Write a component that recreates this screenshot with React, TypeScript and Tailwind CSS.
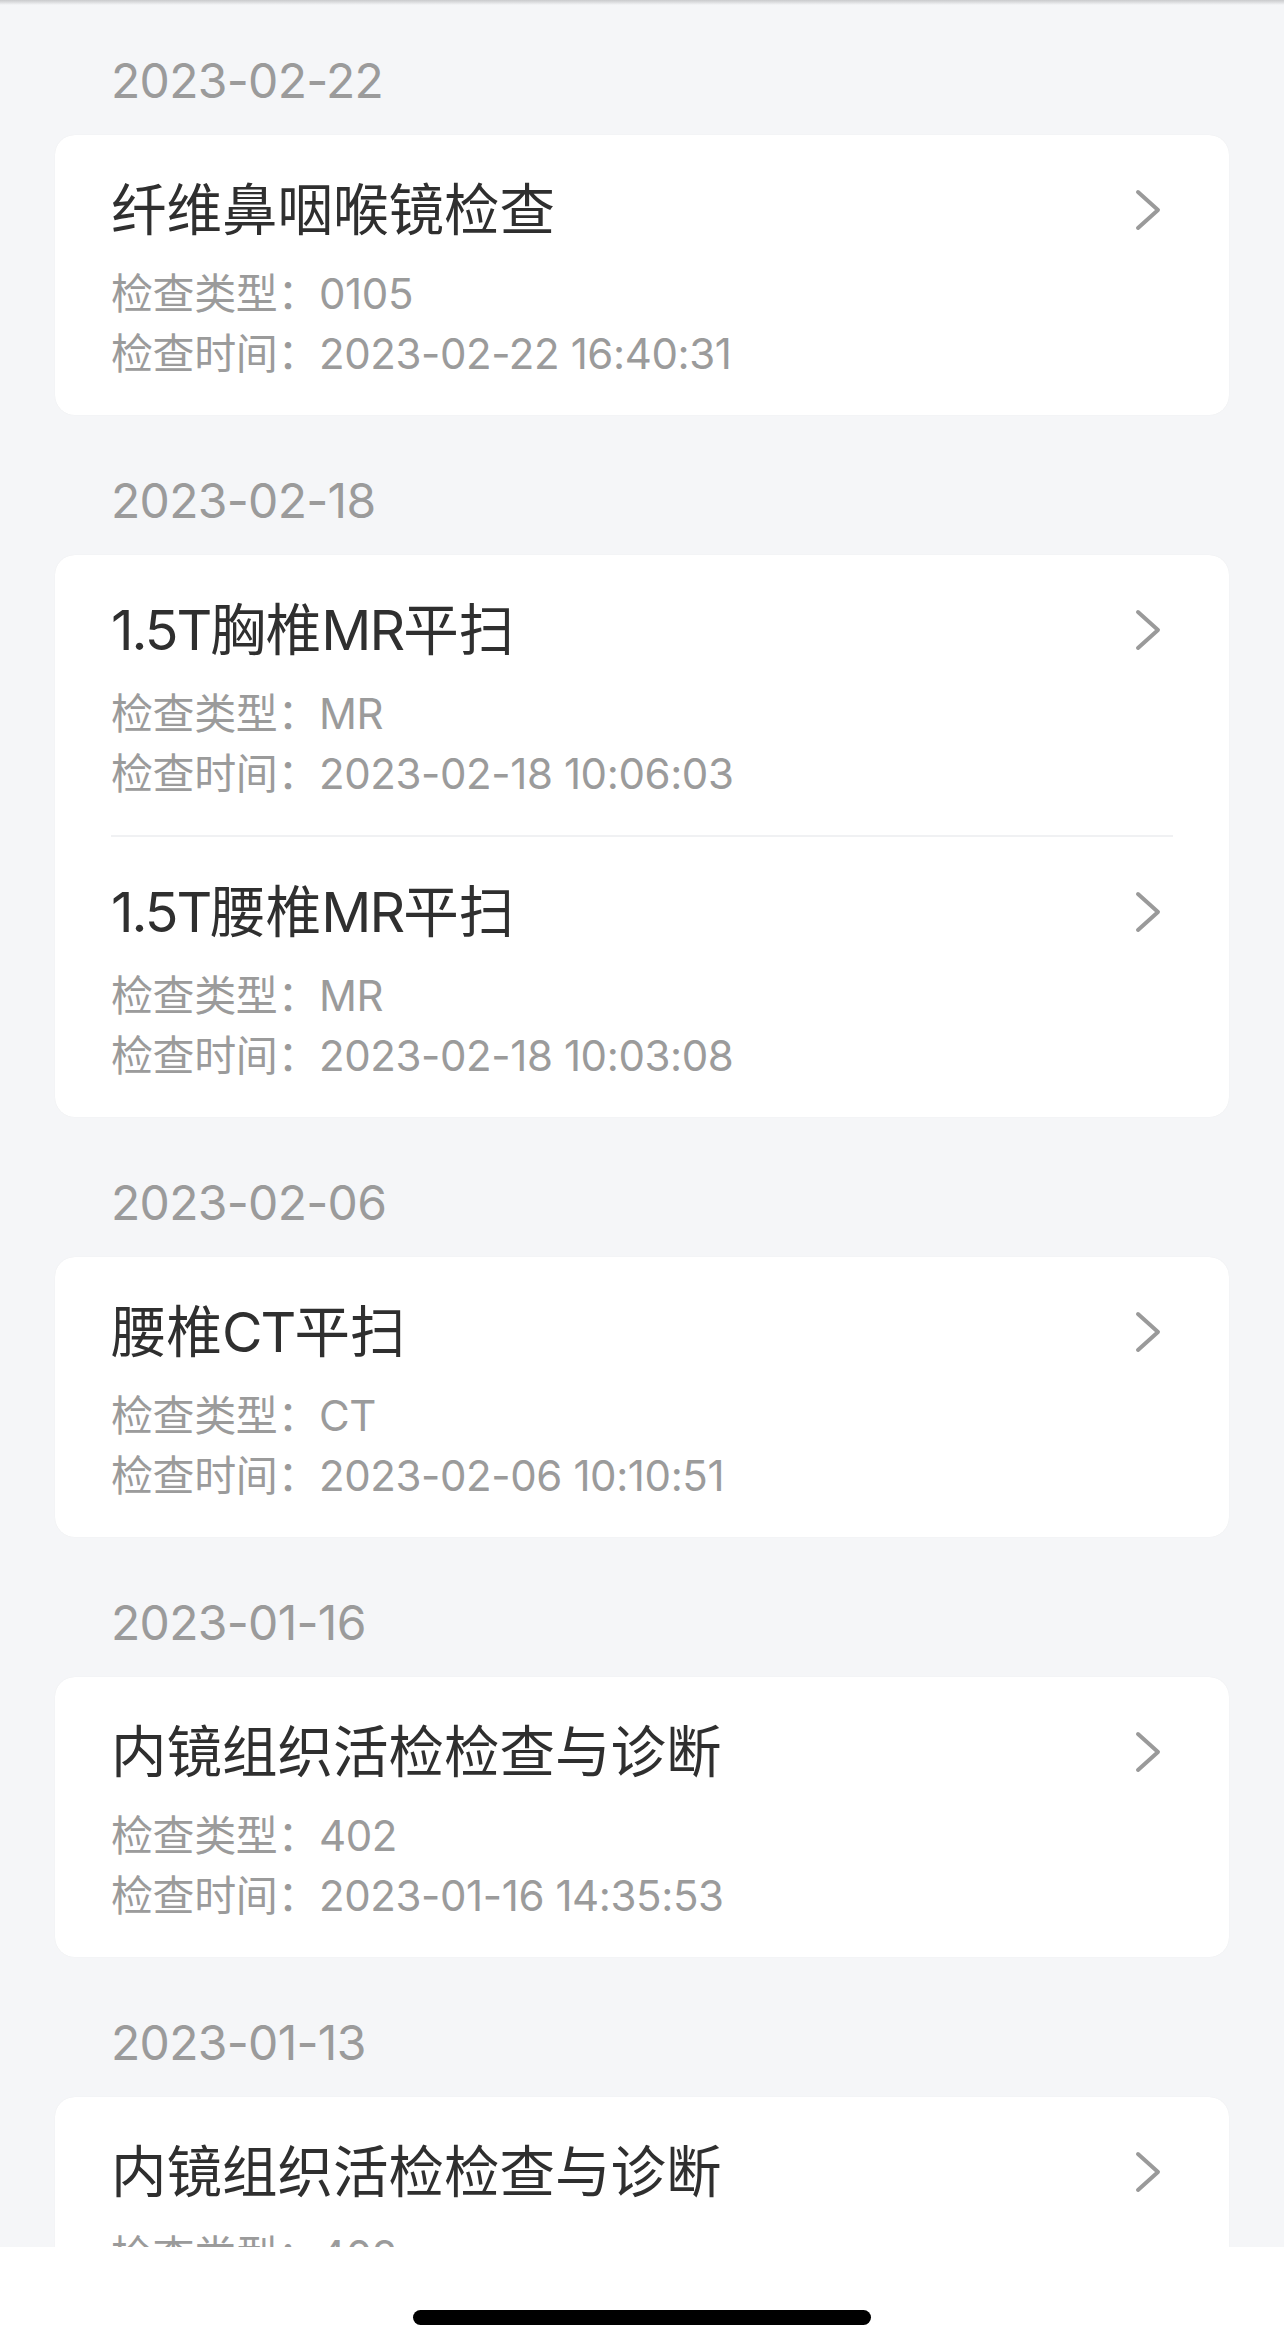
import React from "react";

interface Exam {
  name: string;
  type: string;
  time: string;
}

interface Group {
  date: string;
  exams: Exam[];
}

const groups: Group[] = [
  {
    date: "2023-02-22",
    exams: [{ name: "纤维鼻咽喉镜检查", type: "0105", time: "2023-02-22 16:40:31" }],
  },
  {
    date: "2023-02-18",
    exams: [
      { name: "1.5T胸椎MR平扫", type: "MR", time: "2023-02-18 10:06:03" },
      { name: "1.5T腰椎MR平扫", type: "MR", time: "2023-02-18 10:03:08" },
    ],
  },
  {
    date: "2023-02-06",
    exams: [{ name: "腰椎CT平扫", type: "CT", time: "2023-02-06 10:10:51" }],
  },
  {
    date: "2023-01-16",
    exams: [{ name: "内镜组织活检检查与诊断", type: "402", time: "2023-01-16 14:35:53" }],
  },
  {
    date: "2023-01-13",
    exams: [{ name: "内镜组织活检检查与诊断", type: "402", time: "2023-01-13 09:12:40" }],
  },
];

const font = { fontFamily: '"Inter", "Noto Sans CJK SC", sans-serif' };

function Chevron() {
  return (
    <svg width="28" height="42" viewBox="0 0 28 42" fill="none" className="mr-[11px] shrink-0">
      <path
        d="M4 3 L24 21 L4 39"
        stroke="#9a9a9a"
        strokeWidth="4"
        strokeLinecap="round"
        strokeLinejoin="round"
      />
    </svg>
  );
}

// latin runs in the title are a bit wider in Inter than in the original, tighten them
function Title({ text }: { text: string }) {
  const parts = text.split(/([A-Za-z0-9.]+)/).filter(Boolean);
  return (
    <span className="text-[55.5px] leading-[64px] text-[#2f2f2f] whitespace-nowrap">
      {parts.map((p, i) =>
        /^[A-Za-z0-9.]+$/.test(p) ? (
          <span key={i} className="tracking-[-2px]">
            {p}
          </span>
        ) : (
          <span key={i}>{p}</span>
        )
      )}
    </span>
  );
}

function ExamItem({ exam, last }: { exam: Exam; last: boolean }) {
  return (
    <div className="px-[56px]">
      <div className={`pt-[43px] pb-[31px] ${last ? "" : "border-b-2 border-[#f0f1f3]"}`}>
        {/* title + arrow */}
        <div className="flex items-center justify-between h-[64px]">
          <Title text={exam.name} />
          <Chevron />
        </div>
        <div className="mt-[22px] text-[42px] leading-[60px] tracking-[-0.4px] text-[#9b9b9b]">
          <div>检查类型：{exam.type}</div>
          <div>检查时间：{exam.time}</div>
        </div>
      </div>
    </div>
  );
}

export default function App() {
  return (
    <div className="w-[1284px] h-[2349px] flex flex-col bg-[#f5f6f8]" style={font}>
      <div className="h-[2247px] overflow-hidden">
        {/* header shadow */}
        <div className="h-[5px] bg-gradient-to-b from-[#c9cacc] to-[#f5f6f8]" />
        {groups.map((g, i) => (
          <div key={g.date + i}>
            <div
              className={`px-[111px] ${i === 0 ? "pt-[52px]" : "pt-[62px]"} pb-[30px] text-[48px] leading-[48px] tracking-[-0.7px] text-[#9b9b9b]`}
            >
              {g.date}
            </div>
            <div className="mx-[55px] bg-white rounded-[20px] shadow-[0_0_1px_rgba(0,0,0,0.08)]">
              {g.exams.map((e, j) => (
                <ExamItem key={j} exam={e} last={j === g.exams.length - 1} />
              ))}
            </div>
          </div>
        ))}
      </div>
      {/* home indicator bar */}
      <div className="h-[102px] bg-white flex justify-center pt-[63px]">
        <div className="w-[458px] h-[15px] rounded-full bg-black" />
      </div>
    </div>
  );
}
